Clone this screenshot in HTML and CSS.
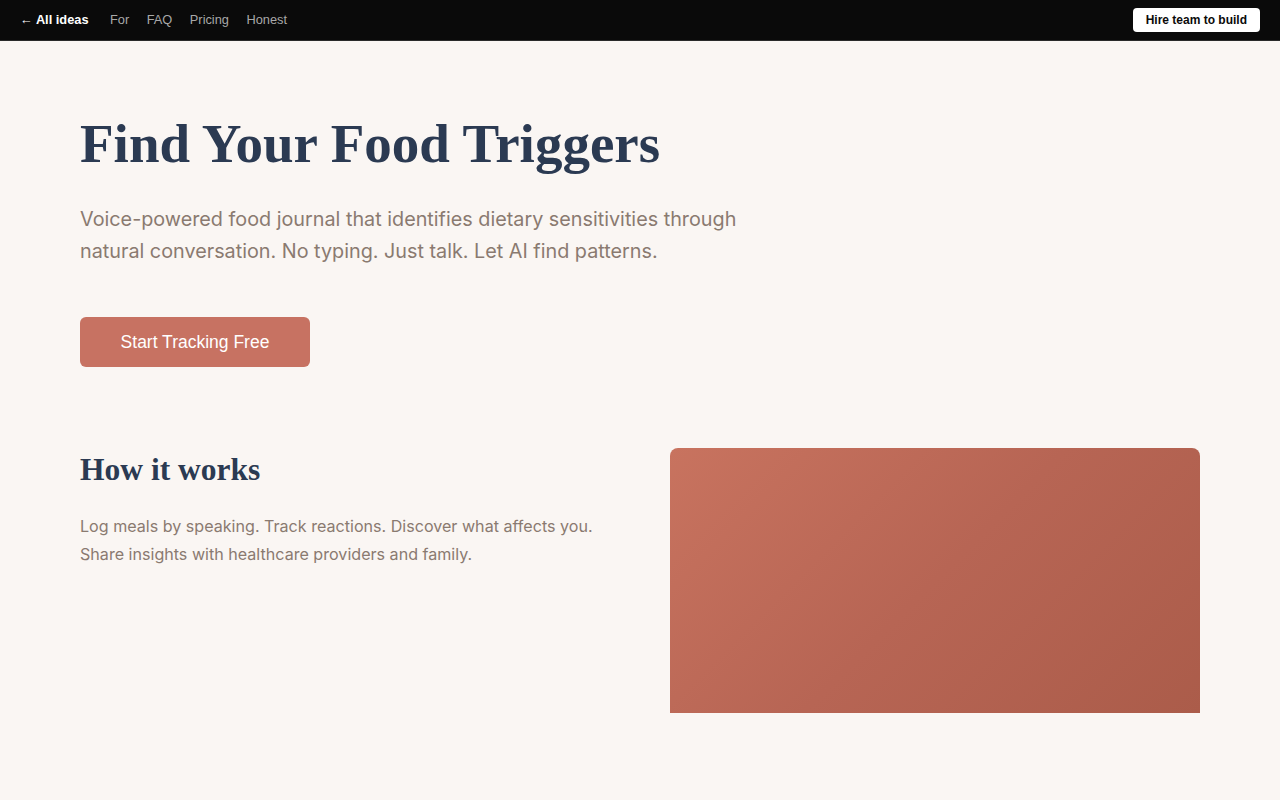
FILE: index.html
```html
<!DOCTYPE html>
<html lang="en">
<head>
    <meta charset="UTF-8">
    <meta name="viewport" content="width=device-width, initial-scale=1.0">
    <title>Find Your Food Triggers</title>
    <link rel="stylesheet" href="styles.css">
</head>
<body>
    <nav class="topbar">
        <div class="topbar-links">
            <a href="#" class="back">&larr; All ideas</a>
            <a href="#">For</a>
            <a href="#">FAQ</a>
            <a href="#">Pricing</a>
            <a href="#">Honest</a>
        </div>
        <a href="#" class="hire">Hire team to build</a>
    </nav>

    <main class="page">
        <section class="hero">
            <h1>Find Your Food Triggers</h1>
            <p class="lead">Voice-powered food journal that identifies dietary sensitivities through natural conversation. No typing. Just talk. Let AI find patterns.</p>
            <a href="#" class="cta">Start Tracking Free</a>
        </section>

        <section class="how">
            <div class="how-text">
                <h2>How it works</h2>
                <p>Log meals by speaking. Track reactions. Discover what affects you. Share insights with healthcare providers and family.</p>
            </div>
            <div class="how-visual"></div>
        </section>
    </main>
</body>
</html>
```

FILE: styles.css
```css
body {
    margin: 0;
    padding: 0;
    background-color: #faf6f3;
    font-family: "Inter", "Lato", sans-serif;
}
a {
    text-decoration: none;
}
.topbar {
    height: 39px;
    padding: 0 20px 1px;
    background-color: #0a0a0a;
    border-bottom: 1px solid #2a2a2a;
    display: flex;
    align-items: center;
    justify-content: space-between;
    font-family: "Liberation Sans", Arial, sans-serif;
    font-size: 12.8px;
}
.topbar-links {
    display: flex;
    align-items: center;
    gap: 17.5px;
}
.topbar-links a {
    color: #a8a8a8;
}
.topbar-links a.back {
    color: #ffffff;
    font-weight: bold;
    margin-right: 4px;
}
.hire {
    background: #ffffff;
    color: #0a0a0a;
    font-weight: bold;
    font-size: 12px;
    padding: 5px 13px;
    border-radius: 4px;
}
.page {
    max-width: 1120px;
    margin: 0 auto;
}
.hero {
    padding-top: 70px;
}
h1 {
    font-family: "Liberation Serif", "Times New Roman", serif;
    font-size: 55px;
    font-weight: bold;
    color: #2b3a52;
    margin: 0;
    line-height: 1.2;
}
.lead {
    font-size: 19.8px;
    line-height: 32px;
    color: #8a7a70;
    max-width: 700px;
    margin: 26px 0 0;
}
.cta {
    display: inline-block;
    margin-top: 50px;
    width: 230px;
    height: 50px;
    line-height: 50px;
    text-align: center;
    background-color: #c77262;
    color: #ffffff;
    border-radius: 6px;
    font-family: "Liberation Sans", Arial, sans-serif;
    font-size: 17.5px;
}
.how {
    display: grid;
    grid-template-columns: 1fr 1fr;
    gap: 60px;
    margin-top: 81px;
}
.how-text h2 {
    font-family: "Liberation Serif", "Times New Roman", serif;
    font-size: 31.5px;
    font-weight: bold;
    color: #2b3a52;
    margin: 0;
    padding-top: 2px;
    line-height: 1.3;
}
.how-text p {
    font-size: 16.1px;
    line-height: 28px;
    color: #8a7a70;
    margin: 21px 0 0;
}
.how-visual {
    height: 265px;
    border-radius: 8px 8px 0 0;
    background: linear-gradient(135deg, #c8735f 0%, #b76554 50%, #ab5c4a 100%);
}
```
